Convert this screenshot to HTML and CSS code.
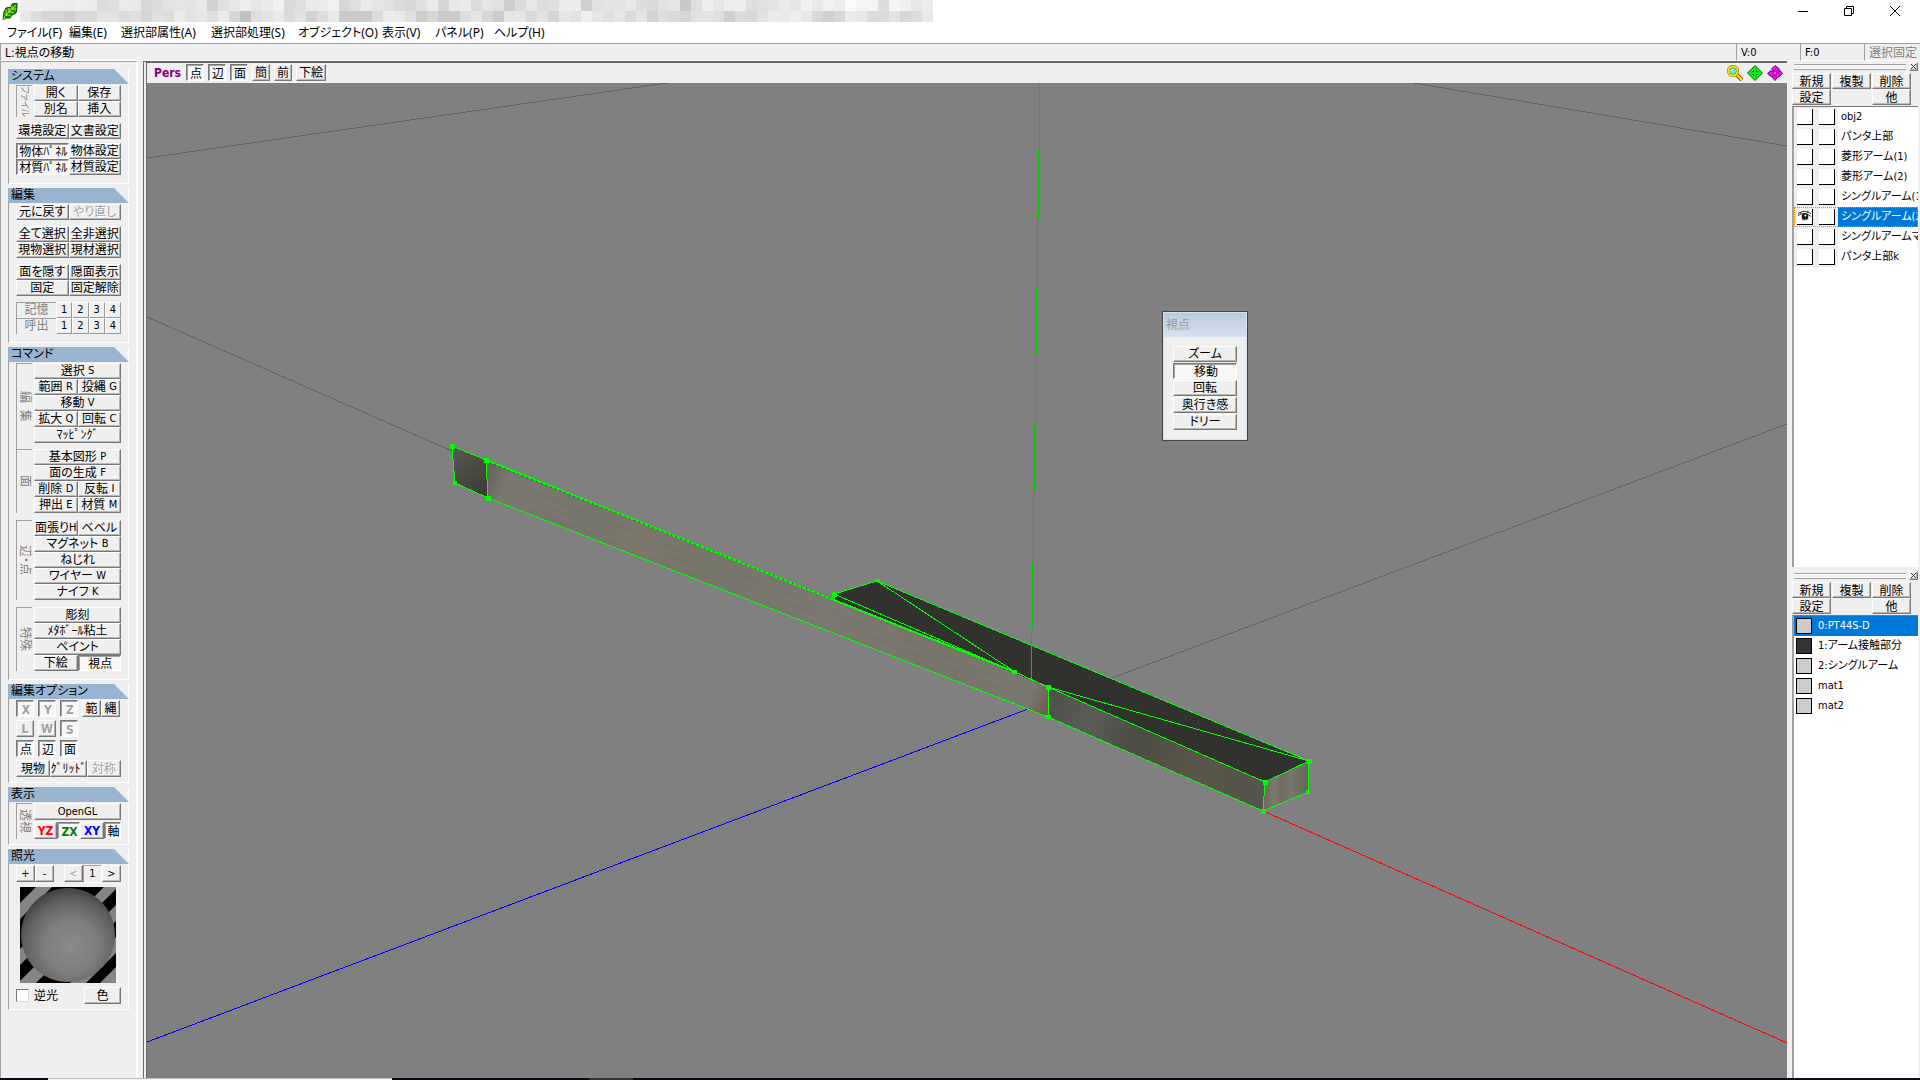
FILE: index.html
```html
<!DOCTYPE html>
<html lang="ja">
<head>
<meta charset="utf-8">
<title>視点の移動</title>
<link rel="stylesheet" href="styles.css">
</head>
<body>
<header class="titlebar">
  <svg class="leaf" viewBox="0 0 16 18" aria-hidden="true">
    <path d="M1 17 L2 9 L4 5 L9 4 L10 1 L15 0 L15 5 L14 10 L10 12 L8 15 L4 15 Z" fill="#08b010" stroke="#044a10"/>
    <path d="M1 17 L4 12 L8 8 L14 2 M4 12 V7 M4 12 H9 M7 9 V5 M7 9 H12 M10 6 V3 M10 6 H14" fill="none" stroke="#d8e020"/>
    <path d="M3 14 H7 M6 11 H10 M9 8 H13 M3 10 V8 M12 3 V1" fill="none" stroke="#05601a"/>
  </svg>
  <div class="mosaic" id="mosaic"></div>
  <div class="winctl">
    <button type="button" aria-label="最小化"><svg viewBox="0 0 12 12"><path d="M1 6.500 H11"/></svg></button>
    <button type="button" aria-label="元に戻す"><svg viewBox="0 0 12 12"><path d="M1.500 3.500 H8.500 V10.500 H1.500 Z M3.500 3 V1.500 H10.500 V8.500 H9"/></svg></button>
    <button type="button" aria-label="閉じる"><svg viewBox="0 0 12 12"><path d="M1 1 L11 11 M11 1 L1 11"/></svg></button>
  </div>
</header>
<nav class="menubar">
  <a href="#">ファイル(F)</a><a href="#">編集(E)</a><a href="#">選択部属性(A)</a><a href="#">選択部処理(S)</a><a href="#">オブジェクト(O)</a><a href="#">表示(V)</a><a href="#">パネル(P)</a><a href="#">ヘルプ(H)</a>
</nav>
<div class="status">
  <span class="msg">L:視点の移動</span><span class="lat">V:0</span><span class="lat">F:0</span><span class="off">選択固定</span>
</div>

<main class="work">
  <aside class="side">
    <section class="group">
      <h2>システム</h2>
      <div class="labeled">
        <span class="vlabel tight">ファイル</span>
        <div class="block two">
          <button type="button">開く</button><button type="button">保存</button>
          <button type="button">別名</button><button type="button">挿入</button>
        </div>
      </div>
      <div class="block two sp">
        <button type="button">環境設定</button><button type="button">文書設定</button>
      </div>
      <div class="block two near">
        <button type="button" class="on">物体ﾊﾟﾈﾙ</button><button type="button">物体設定</button>
        <button type="button" class="on">材質ﾊﾟﾈﾙ</button><button type="button">材質設定</button>
      </div>
      <div class="tail"></div>
    </section>

    <section class="group">
      <h2>編集</h2>
      <div class="block two">
        <button type="button">元に戻す</button><button type="button" disabled>やり直し</button>
      </div>
      <div class="block two sp">
        <button type="button">全て選択</button><button type="button">全非選択</button>
        <button type="button">現物選択</button><button type="button">現材選択</button>
      </div>
      <div class="block two sp">
        <button type="button">面を隠す</button><button type="button">隠面表示</button>
        <button type="button">固定</button><button type="button">固定解除</button>
      </div>
      <div class="block memo sp">
        <span class="plate">記憶</span><button type="button">1</button><button type="button">2</button><button type="button">3</button><button type="button">4</button>
        <span class="plate">呼出</span><button type="button">1</button><button type="button">2</button><button type="button">3</button><button type="button">4</button>
      </div>
      <div class="tail"></div>
    </section>

    <section class="group">
      <h2>コマンド</h2>
      <div class="labeled">
        <span class="vlabel">編&nbsp; 集</span>
        <div class="block two joined">
          <button type="button" class="all">選択 <i>S</i></button>
          <button type="button">範囲 <i>R</i></button><button type="button">投縄 <i>G</i></button>
          <button type="button" class="all">移動 <i>V</i></button>
          <button type="button">拡大 <i>Q</i></button><button type="button">回転 <i>C</i></button>
          <button type="button" class="all">ﾏｯﾋﾟﾝｸﾞ</button>
        </div>
      </div>
      <div class="labeled">
        <span class="vlabel">面</span>
        <div class="block two">
          <button type="button" class="all">基本図形 <i>P</i></button>
          <button type="button" class="all">面の生成 <i>F</i></button>
          <button type="button">削除 <i>D</i></button><button type="button">反転 <i>I</i></button>
          <button type="button">押出 <i>E</i></button><button type="button">材質 <i>M</i></button>
        </div>
      </div>
      <div class="labeled far">
        <span class="vlabel">辺・点</span>
        <div class="block two">
          <button type="button">面張り<i>H</i></button><button type="button">ベベル</button>
          <button type="button" class="all">マグネット <i>B</i></button>
          <button type="button" class="all">ねじれ</button>
          <button type="button" class="all">ワイヤー <i>W</i></button>
          <button type="button" class="all">ナイフ <i>K</i></button>
        </div>
      </div>
      <div class="labeled far">
        <span class="vlabel">特殊</span>
        <div class="block two">
          <button type="button" class="all">彫刻</button>
          <button type="button" class="all">ﾒﾀﾎﾞｰﾙ粘土</button>
          <button type="button" class="all">ペイント</button>
          <button type="button">下絵</button><button type="button" class="on">視点</button>
        </div>
      </div>
      <div class="tail"></div>
    </section>

    <section class="group">
      <h2>編集オプション</h2>
      <div class="bar b5">
        <button type="button" class="on axis" disabled>X</button><button type="button" class="on axis" disabled>Y</button><button type="button" class="on axis" disabled>Z</button><button type="button">範</button><button type="button">縄</button>
      </div>
      <div class="bar b5">
        <button type="button" class="axis" disabled>L</button><button type="button" class="axis" disabled>W</button><button type="button" class="on axis" disabled>S</button>
      </div>
      <div class="bar b5">
        <button type="button" class="on">点</button><button type="button" class="on">辺</button><button type="button" class="on">面</button>
      </div>
      <div class="bar b3">
        <button type="button">現物</button><button type="button">ｸﾞﾘｯﾄﾞ</button><button type="button" disabled>対称</button>
      </div>
      <div class="tail short"></div>
    </section>

    <section class="group">
      <h2>表示</h2>
      <div class="labeled">
        <span class="vlabel">透視</span>
        <div class="views">
          <button type="button" class="all lat">OpenGL</button>
          <button type="button" class="axis red">YZ</button><button type="button" class="on axis green">ZX</button><button type="button" class="axis blue">XY</button><button type="button" class="on">軸</button>
        </div>
      </div>
      <div class="tail short"></div>
    </section>

    <section class="group">
      <h2>照光</h2>
      <div class="bar light">
        <button type="button" class="lat">+</button><button type="button" class="lat">-</button><span></span><button type="button" class="lat" disabled>&lt;</button><span class="count lat">1</span><button type="button" class="lat">&gt;</button>
      </div>
      <svg class="ball" viewBox="0 0 96 96" role="img" aria-label="照光">
        <defs>
          <radialGradient id="lit" cx=".53" cy=".62" r=".7"><stop offset="0" stop-color="#8a8a8a"/><stop offset=".4" stop-color="#7e7e7e"/><stop offset=".7" stop-color="#606060"/><stop offset="1" stop-color="#2c2c2c"/></radialGradient>
        </defs>
        <path d="M0 0H96V96H0Z" fill="#000"/>
        <path d="M16 0H32L0 32V16Z M84 0H96V2L64 34 60 24Z M96 18V34L70 60V44Z M96 50V66L66 96H50Z M0 62V78L24 54H8Z M0 94 40 54V72L16 96H0Z M80 96 96 80V96Z" fill="#858585"/>
        <circle cx="48" cy="48" r="47" fill="url(#lit)"/>
      </svg>
      <div class="lightopt">
        <input type="checkbox" id="back"><label for="back">逆光</label><button type="button">色</button>
      </div>
      <div class="tail short"></div>
    </section>
  </aside>

  <section class="view">
    <div class="viewbar">
      <strong>Pers</strong>
      <button type="button" class="on">点</button><button type="button" class="on">辺</button><button type="button" class="on">面</button><button type="button">簡</button><button type="button">前</button><button type="button" class="long">下絵</button>
      <span class="tools">
        <svg viewBox="0 0 16 16"><path d="M9 9 L15 15" stroke="#706000" stroke-width="4"/><path d="M9 9 L15 15" stroke="#ffe800" stroke-width="2"/><circle cx="6" cy="6" r="4.500" fill="#50f0f8" stroke="#706000" stroke-width="3"/><circle cx="6" cy="6" r="4.500" fill="none" stroke="#ffe800" stroke-width="2"/><path d="M4 6 L6 4" stroke="#fff"/></svg>
        <svg viewBox="0 0 16 16"><path d="M8 .5 L15.500 8 L8 15.500 L.5 8 Z" fill="#00f010" stroke="#047008"/><path d="M5 5h2v2h-2z M9 5h2v2h-2z M5 9h2v2h-2z M9 9h2v2h-2z" fill="#066a0c"/><path d="M5 5h1v1h-1z M10 5h1v1h-1z M5 10h1v1h-1z M10 10h1v1h-1z" fill="#c8ecc8"/></svg>
        <svg viewBox="0 0 16 16"><path fill-rule="evenodd" d="M8 .5 L12.500 4 L11 5 L11 7 L12.500 7 L12.500 5 L15.500 8.500 L12 12 L10.500 12 L8 15.500 L5 12 L6 11 L4 11.500 L.5 8.500 L4 5.500 L5 7 L6 5 L4.500 4 Z M7 6 L9 6 L9 10 L7 10 Z" fill="#f808f8" stroke="#780078"/></svg>
      </span>
    </div>
    <div class="canvas">
      <svg class="scene" viewBox="147 83 1640 995" preserveAspectRatio="xMidYMid slice" role="img" aria-label="シングルアーム">
        <defs>
          <linearGradient id="side" gradientUnits="userSpaceOnUse" x1="488" y1="480" x2="1048" y2="700"><stop offset="0" stop-color="#666660"/><stop offset=".03" stop-color="#797770"/><stop offset=".2" stop-color="#75756a"/><stop offset=".27" stop-color="#7b7668"/><stop offset=".4" stop-color="#757568"/><stop offset=".6" stop-color="#7a786f"/><stop offset=".8" stop-color="#77746a"/><stop offset=".97" stop-color="#78786f"/><stop offset="1" stop-color="#706050"/></linearGradient>
          <linearGradient id="end" gradientUnits="userSpaceOnUse" x1="455" y1="450" x2="488" y2="498"><stop offset="0" stop-color="#57574f"/><stop offset="1" stop-color="#3a3a33"/></linearGradient>
          <linearGradient id="front" gradientUnits="userSpaceOnUse" x1="1048" y1="700" x2="1265" y2="797"><stop offset="0" stop-color="#50504a"/><stop offset=".2" stop-color="#5b5c56"/><stop offset=".4" stop-color="#4b4c43"/><stop offset=".65" stop-color="#5a554a"/><stop offset="1" stop-color="#54554b"/></linearGradient>
          <linearGradient id="cap"><stop offset="0" stop-color="#686860"/><stop offset=".25" stop-color="#7b7b72"/><stop offset=".4" stop-color="#706b60"/><stop offset=".6" stop-color="#77766b"/><stop offset="1" stop-color="#66665e"/></linearGradient>
        </defs>
        <g class="grid">
          <path d="M147 158 L667 83 M147 317 L452 451 M1112 678 L1787 424 M1414 83 L1787 146"/>
        </g>
        <path class="ln zaxis" d="M1028 709 L147 1042"/>
        <path class="ln xaxis" d="M1263 811 L1787 1043"/>
        <path d="M834 594 L877 581 L1309 761 L1265 782 L1048 687 L834 600Z" fill="#31312d"/>
        <path d="M486 460 L1048 687 L1048 717 L488 498Z" fill="url(#side)"/>
        <path d="M500 474 L1040 690 M520 492 L1040 699 M495 490 L900 653" stroke="#85847c" stroke-opacity=".2" stroke-width="4" fill="none"/>
        <path d="M452 446 L486 460 L488 498 L455 483Z" fill="url(#end)"/>
        <path d="M1048 687 L1265 782 L1263 811 L1048 717Z" fill="url(#front)"/>
        <path d="M1265 782 L1309 761 L1308 792 L1263 811Z" fill="url(#cap)"/>
        <path class="ln yaxis" d="M1040 83 L1032 630 L1031 680"/>
        <g class="ln edge">
          <path d="M452 446 L486 460 L488 498 L455 483Z M488 498 L1048 717 L1263 811 L1308 792 L1309 761 L1265 782 L1048 687 L1048 717 M1265 782 L1263 811 M834 602 L834 594 L877 581 L1309 761 L1048 687 M877 581 L1015 672 L834 594"/>
          <path class="thick" d="M486 460 L834 600 L1015 672"/><path d="M1015 672 L1048 687"/>
        </g>
        <path class="dots" d="M490 463 L830 598"/>
        <g class="pt"><path d="M450 444h5v5h-5z M484 458h5v5h-5z M486 496h5v5h-5z M453 481h4v4h-4z M832 592h5v5h-5z M875 579h5v3h-5z M1012 670h5v4h-5z M1046 685h5v5h-5z M1046 715h5v4h-5z M1263 780h5v5h-5z M1261 809h5v5h-5z M1307 759h5v5h-5z M1306 790h4v4h-4z M1011 702h3v2h-3z"/></g>
      </svg>
      <div class="palette">
        <h3>視点</h3>
        <div class="pbody">
          <button type="button">ズーム</button><button type="button" class="on">移動</button><button type="button">回転</button><button type="button">奥行き感</button><button type="button">ドリー</button>
        </div>
      </div>
    </div>
  </section>

  <aside class="right">
    <section class="dock objects">
      <div class="grip"><span></span><button type="button" aria-label="閉じる"><svg viewBox="0 0 7 7"><path d="M1 1L6 6M6 1L1 6"/></svg></button></div>
      <div class="cmds">
        <button type="button">新規</button><button type="button">複製</button><button type="button">削除</button>
        <button type="button">設定</button><span></span><button type="button">他</button>
      </div>
      <ul class="list">
        <li><b></b><b></b><span>obj2</span></li>
        <li><b></b><b></b><span>パンタ上部</span></li>
        <li><b></b><b></b><span>菱形アーム(1)</span></li>
        <li><b></b><b></b><span>菱形アーム(2)</span></li>
        <li><b></b><b></b><span>シングルアーム(1</span></li>
        <li class="sel"><b><svg viewBox="0 0 16 16"><path d="M1 5 Q8 0 15 5 M1 7 Q8 2 15 8 M3 3 L4 5 M12 2 L11 4" fill="none" stroke="#222"/><circle cx="8.500" cy="8" r="3.500" fill="#111"/><path d="M8 6h2v2h-2z" fill="#fff"/><path d="M5 11 L8 12 M10 12 L12 10" stroke="#555"/></svg></b><b></b><span>シングルアーム(2</span></li>
        <li><b></b><b></b><span>シングルアームマ</span></li>
        <li><b></b><b></b><span>パンタ上部k</span></li>
      </ul>
    </section>
    <section class="dock materials">
      <div class="grip"><span></span><button type="button" aria-label="閉じる"><svg viewBox="0 0 7 7"><path d="M1 1L6 6M6 1L1 6"/></svg></button></div>
      <div class="cmds">
        <button type="button">新規</button><button type="button">複製</button><button type="button">削除</button>
        <button type="button">設定</button><span></span><button type="button">他</button>
      </div>
      <ul class="list">
        <li class="sel"><em></em><span>0:PT44S-D</span></li>
        <li><em class="dark"></em><span>1:アーム接触部分</span></li>
        <li><em></em><span>2:シングルアーム</span></li>
        <li><em></em><span>mat1</span></li>
        <li><em></em><span>mat2</span></li>
      </ul>
    </section>
  </aside>
</main>
<footer class="taskbar"><span class="t1"></span><span class="t2"></span><span class="t3"></span><span class="t4"></span></footer>
<script src="mosaic.js"></script>
</body>
</html>
```
FILE: styles.css
```css
* { box-sizing: border-box; }
body {
  margin: 0;
  height: 100vh;
  display: flex;
  flex-direction: column;
  overflow: hidden;
  background: #efefef;
  color: #000;
  font: 12px/16px "DejaVu Sans Condensed", "Noto Sans CJK JP", sans-serif;
  font-feature-settings: "palt";
  white-space: nowrap;
}
.lat, button i { font-size: 11px; font-style: normal; }
button {
  display: flex;
  align-items: center;
  justify-content: center;
  min-width: 0;
  height: 16px;
  padding: 0;
  font: inherit;
  font-feature-settings: inherit;
  color: #000;
  background: #efefef;
  border: 1px solid;
  border-color: #fff #777 #777 #fff;
  box-shadow: inset -1px -1px #b8b8b8;
  white-space: pre;
}
button.lat { font-size: 11px; }
button.on {
  border-color: #777 #fff #fff #777;
  box-shadow: inset 1px 1px #a0a0a0;
  background: #f7f7f7;
  padding: 2px 0 0 2px;
}
button:disabled { color: #a0a0a0; text-shadow: 1px 1px #fff; }

.titlebar { display: flex; height: 23px; background: #fff; }
.leaf { width: 16px; height: 18px; margin: 3px 2px 0; }
.mosaic { display: grid; grid-template-columns: repeat(83, 11px); grid-auto-rows: 11px; height: 22px; }
.winctl { margin-left: auto; padding-right: 2px; display: flex; }
.winctl button { width: 46px; height: 22px; background: none; border: 0; box-shadow: none; }
.winctl svg { width: 12px; height: 12px; fill: none; stroke: #000; }

.menubar {
  display: grid;
  grid-template-columns: 62px 52px 90px 87px 84px 53px 59px 60px;
  height: 20px;
  padding-left: 7px;
  background: #fff;
  font-family: "Noto Sans", "Noto Sans CJK JP", sans-serif;
  line-height: 20px;
}
.menubar a { color: #000; text-decoration: none; }

.status { display: flex; height: 18px; border-top: 1px solid #a0a0a0; line-height: 18px; }
.status span { width: 62px; margin-right: 2px; padding-left: 4px; border-left: 1px solid #a0a0a0; border-bottom: 1px solid #fff; }
.status .msg { flex: 1; }
.status span:last-child { width: 56px; margin: 0; }
.status .off { color: #808080; }

.work { flex: 1; display: flex; min-height: 0; }

.side {
  width: 138px;
  padding: 7px 7px 0 7px;
  border: solid;
  border-width: 1px 2px 0 1px;
  border-color: #a0a0a0 #fff #fff #a0a0a0;
  display: flex;
  flex-direction: column;
  gap: 4px;
}
.group {
  width: 121px;
  padding: 0 7px;
  border: solid #fff;
  border-width: 0 1px 1px;
  border-left-color: #a0a0a0;
}
.group h2 {
  margin: 0 -8px 1px;
  padding-left: 3px;
  height: 15px;
  font: inherit;
  line-height: 15px;
  background: #99b4d1;
  clip-path: polygon(0 0, 106px 0, 100% 100%, 0 100%);
}
.block { display: grid; }
.two { grid-template-columns: 1fr 1fr; }
.near { margin-top: 4px; }
.sp { margin-top: 6px; }
.far { margin-top: 7px; }
.tail { height: 8px; }
.short { height: 5px; }
.all { grid-column: 1 / -1; }
.labeled { display: grid; grid-template-columns: 16px 87px; gap: 2px; }
.vlabel {
  contain: size;
  writing-mode: vertical-rl;
  text-orientation: sideways;
  text-align: center;
  color: #808080;
  border: solid #a0a0a0;
  border-width: 1px 0 0 1px;
  line-height: 14px;
}
.tight { font-size: 9px; }
.joined { padding-bottom: 6px; }
.memo { grid-template-columns: 40px repeat(4, 1fr); }
.memo button { border-color: #fff #999 #999 #fff; box-shadow: none; font-size: 11px; }
.plate { text-align: center; color: #808080; border: solid #a0a0a0; border-width: 1px 0 0 1px; height: 16px; line-height: 14px; }
.bar { display: grid; height: 17px; margin-bottom: 3px; }
.bar button { height: 17px; }
.b5 { grid-template-columns: 18px 18px 18px 19px 19px; column-gap: 4px; }
.b5 button:nth-child(5) { margin-left: -4px; width: 19px; }
.b3 { grid-template-columns: 34px 37px 34px; }
.group .b3 { margin-bottom: 0; }
.axis { font: bold 12px/14px "DejaVu Sans Condensed", sans-serif; }
.red { color: #f00; }
.green { color: #008000; }
.blue { color: #00f; }
.views { display: grid; grid-template-columns: 23px 23px 24px 17px; row-gap: 2px; }
.views button { height: 17px; }
.light { grid-template-columns: 19px 19px 10px 19px 19px 19px; }
.group .light { margin-bottom: 5px; }
.count { text-align: center; border: 1px solid; border-color: #a0a0a0 #fff #fff #a0a0a0; }
.ball { display: block; width: 96px; height: 96px; margin: 0 4px 4px; }
.lightopt { display: flex; align-items: center; height: 17px; }
.lightopt input {
  appearance: none;
  width: 13px;
  height: 13px;
  margin: 0 5px 0 0;
  background: #fff;
  border: 1px solid;
  border-color: #777 #ddd #ddd #777;
}
.lightopt button { width: 37px; height: 17px; margin-left: auto; }

.view {
  flex: 1;
  min-width: 0;
  margin-left: 5px;
  display: flex;
  flex-direction: column;
  border: solid #696969;
  border-width: 2px 0 0 4px;
  border-left-style: double;
}
.viewbar { display: flex; align-items: flex-start; height: 20px; padding: 1px 4px 0 7px; background: #efefef; }
.viewbar strong { width: 32px; color: #800080; font: bold 12px/18px "DejaVu Sans Condensed", sans-serif; }
.viewbar button { width: 18px; height: 17px; margin-right: 4px; }
.viewbar .long { width: 30px; }
.tools { display: flex; gap: 4px; margin-left: auto; padding-top: 1px; }
.tools svg { width: 16px; height: 16px; }
.canvas { flex: 1; position: relative; min-height: 0; background: #808080; }
.scene { display: block; width: 100%; height: 100%; }
.grid, .ln { fill: none; stroke-width: 1; shape-rendering: crispEdges; }
.grid { stroke: #5c685c; }
.xaxis { stroke: #f00; }
.yaxis { stroke: #00c800; }
.zaxis { stroke: #00f; }
.edge { stroke: #0f0; }
.thick { stroke-width: 2; }
.dots { stroke: #052005; stroke-dasharray: 1 4; fill: none; }
.pt { fill: #0f0; shape-rendering: crispEdges; }
.palette {
  position: absolute;
  left: 1015px;
  top: 228px;
  width: 86px;
  border: 1px solid #444;
  background: #efefef;
  box-shadow: inset 0 0 0 1px #d5e2ef;
}
.palette h3 { margin: 1px; padding: 4px 2px 0; height: 24px; font: inherit; color: #999; background: linear-gradient(#bccbdb, #d5e2ef); }
.pbody { display: grid; row-gap: 1px; padding: 8px 10px 10px; }

.right { width: 129px; margin-left: 4px; padding-top: 1px; display: flex; flex-direction: column; }
.dock { display: flex; flex-direction: column; padding: 0 2px 0 1px; }
.objects { height: 509px; flex: none; padding-bottom: 4px; }
.materials { flex: 1; min-height: 0; }
.grip { display: flex; height: 9px; margin-bottom: 2px; padding-left: 2px; }
.grip span { flex: 1; height: 6px; margin: 2px 3px 0 0; border: solid #a0a0a0; border-width: 1px 0; box-shadow: inset 0 1px #fff, inset 0 -1px #fff; }
.grip button { width: 9px; height: 9px; }
.grip svg { width: 7px; height: 7px; stroke: #333; flex: none; }
.cmds { display: grid; grid-template-columns: 39px 39px 39px; column-gap: 1px; height: 32px; margin-bottom: 1px; }
.cmds button { padding-top: 1px; }
.list { flex: 1; min-height: 0; margin: 0; padding: 0; list-style: none; background: #fff; border: solid #777; border-width: 1px 0 0 2px; border-left-color: #a0a0a0; overflow: hidden; font-size: 11px; }
.list li { display: flex; height: 20px; align-items: center; overflow: hidden; line-height: 20px; }
.list b { width: 16px; height: 16px; margin-left: 3px; border: solid #000; border-width: 0 1px 1px 0; flex: none; background: #fff; }
.list b + b { margin-left: 6px; }
.list b svg { display: block; width: 15px; height: 15px; }
.objects .list li { background: linear-gradient(90deg, #efefef 44px, #fff 44px); }
.objects .list span { flex: 1; margin-left: 3px; padding-left: 3px; }
.objects .list .sel { outline: 1px dotted #f80; outline-offset: -1px; }
.sel span { background: #0078d7; color: #fff; }
.materials .list .sel { background: #0078d7; }
.list em { width: 16px; height: 16px; margin: 0 6px 0 2px; border: 1px solid #000; background: #ccc; flex: none; }
.list em.dark { background: #333; }

.taskbar { display: flex; height: 2px; background: #0b0b0f; }
.t1 { width: 48px; }
.t2 { width: 344px; background: #f5f5f5; border-top: 1px solid #bbb; }
.t3 { width: 197px; }
.t4 { width: 44px; background: #333; }
```
FILE: mosaic.js
```js
// Two rows of 11px tiles that cover the document path in the title bar.
const rows = [
  'eeeeeeeeeceeecdcdfebe9d8dce3e4e2e8d0e0e8eee6eaf2dadeeaebf0d8dfeae5e1dbd8dfebd6e8eadbe4e0cddce8dde0ececcfe0e4e2e8ddd9e2e6c8dfefe6eeeddee0e2eae5f1e9f0edfcf4f4ddf6f0e7ece4d8e1dfdbe5f1eaD3e2f7f3ef',
  'e8dcd7d6d0dad8e4e3dce0d5e0ddebe2e5dfebd6c0dde3eadbe2d1dde9c9c9c9dceceadfccd6cacadde5d7cbe4e6dae2d5e6e2efe6dfe6dae4d2dedad6e1e2dfd0dbd8e2ebe9eee7d9d0d7ebe8dadbe3d8dc'
];
const box = document.getElementById('mosaic');
rows.forEach(row => {
  for (let i = 0; i < 83; i++) {
    const at = (i * 2) % row.length;
    const v = row.slice(at, at + 2);
    const tile = document.createElement('span');
    tile.style.background = '#' + v + v + v;
    box.append(tile);
  }
});
```
